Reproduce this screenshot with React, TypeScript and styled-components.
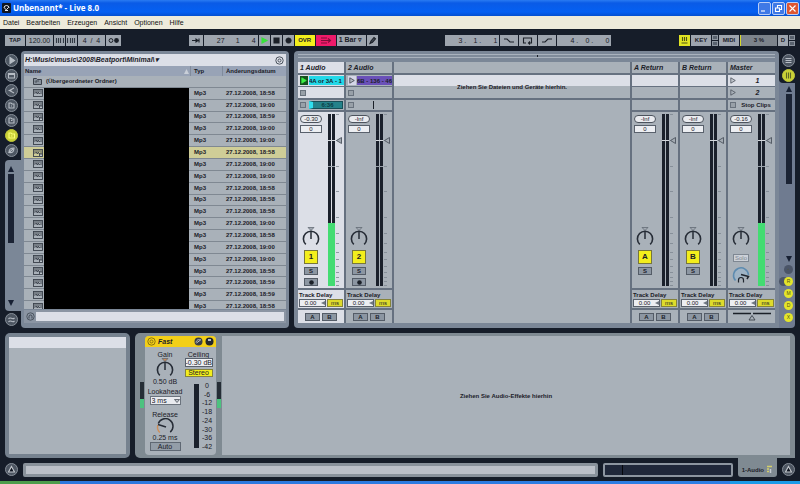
import React from "react";
import styled, { createGlobalStyle, css } from "styled-components";

const c = {
  night: "#161d29",
  frame: "#7b8797",
  line: "#667180",
  face: "#a9b1b9",
  light: "#dcdfe7",
  ink: "#1b2028",
  yellow: "#f3ee1c",
  green: "#43dc72",
  chrome: "#9ea5ae",
};

const Global = createGlobalStyle`
  *, *::before, *::after { box-sizing: border-box; }
  html, body { margin: 0; background: ${c.night}; }
  body, button, input, select {
    font-family: "Liberation Sans", Arial, sans-serif;
    font-size: 7px;
    line-height: 8px;
    color: ${c.ink};
  }
  button, input, select {
    appearance: none;
    margin: 0;
    padding: 0;
    border: 0;
    border-radius: 0;
    min-width: 0;
    outline-offset: 1px;
  }
  svg { display: block; flex: none; }
`;

const Page = styled.div`
  display: flex;
  flex-direction: column;
  min-height: 100vh;
  background: ${c.night};
`;

/* ---------- window ---------- */

const TitleBar = styled.header`
  display: flex;
  align-items: center;
  gap: 2px;
  height: 16px;
  padding: 0 1px 0 2px;
  background: linear-gradient(#2a7bf2 0, #0a5be6 3px, #0560f3 12px, #0450d0 16px);
`;

const Title = styled.h1`
  flex: 1;
  margin: 0;
  font: 700 8px/14px "Open Sans", sans-serif;
  color: #fff;
`;

const WindowButton = styled.button<{ $close?: boolean }>`
  display: grid;
  place-items: center;
  width: 13px;
  height: 13px;
  border: 1px solid #b9cdf6;
  border-radius: 2px;
  background: ${(p) => (p.$close ? "#dd5632" : "#3f79e6")};
`;

const WindowButtons = styled.div`
  display: flex;
  gap: 1px;
`;

const MenuBar = styled.nav`
  display: flex;
  gap: 7px;
  height: 13px;
  padding: 0 3px;
  background: #eeebdb;
`;

const MenuItem = styled.button`
  background: none;
  line-height: 12px;
  color: #111;
`;

/* ---------- control bar ---------- */

const ControlBar = styled.div`
  display: flex;
  justify-content: space-between;
  align-items: center;
  height: 22px;
  padding: 0 5px;
`;

const Group = styled.div`
  display: flex;
  gap: 1px;
`;

const toolFace = css<{ $w: number; $tone?: string }>`
  width: ${(p) => p.$w}px;
  height: 11px;
  background: ${(p) => p.$tone ?? c.chrome};
`;

const Tool = styled.button<{ $w: number; $tone?: string }>`
  ${toolFace}
  display: grid;
  place-items: center;
  font-size: 6px;
  font-weight: 700;
`;

const ToolField = styled.input<{ $w: number }>`
  ${toolFace}
  text-align: center;
`;

const Position = styled.div<{ $w: number }>`
  ${toolFace}
  display: grid;
  grid-template-columns: 21px 15px 1fr;
  align-items: center;
  text-align: right;
  line-height: 11px;
  padding-right: 2px;
`;

const ToolSelect = styled.select<{ $w: number }>`
  ${toolFace}
  padding-left: 2px;
  font-weight: 700;
`;

const Stack = styled.div`
  display: flex;
  flex-direction: column;
  gap: 1px;
`;

const Led = styled.span`
  width: 6px;
  height: 5px;
  background: #59626e;
  border: 1px solid #8d959f;
`;

const Cpu = styled.div<{ $w: number }>`
  ${toolFace}
  display: grid;
  place-items: center;
  font-size: 6px;
  font-weight: 700;
  background: #7c838b;
  border-left: 1px solid #d8d92b;
`;

/* ---------- browser ---------- */

const Workspace = styled.main`
  display: flex;
  height: 277px;
`;

const BrowserRail = styled.nav`
  display: flex;
  flex-direction: column;
  width: 21px;
  padding: 3px 0 2px 5px;
`;

const RailIcons = styled.div`
  display: flex;
  flex-direction: column;
  gap: 2px;
`;

const RoundButton = styled.button<{ $on?: boolean }>`
  display: grid;
  place-items: center;
  width: 13px;
  height: 13px;
  flex: none;
  border-radius: 50%;
  border: 1px solid ${(p) => (p.$on ? "#c2c83a" : "#878f99")};
  background: ${(p) => (p.$on ? "#c9d137" : "#4d5662")};
`;

const ScrollColumn = styled.div`
  display: flex;
  flex-direction: column;
  align-items: center;
  flex: 1;
  margin: 3px 0 2px;
  padding: 6px 4px 5px 0;
  border-radius: 4px 0 0 4px;
  background: ${c.frame};
`;

const Thumb = styled.div<{ $h: number }>`
  width: 6px;
  height: ${(p) => p.$h}px;
  margin: 2px 0 auto;
  background: #1b2334;
`;

const Browser = styled.section`
  display: flex;
  flex-direction: column;
  width: 268px;
  padding: 3px;
  border-radius: 4px;
  background: ${c.frame};
`;

const PathRow = styled.div`
  display: flex;
  align-items: center;
  justify-content: space-between;
  height: 12px;
  padding: 0 2px 0 1px;
  background: ${c.light};
`;

const PathButton = styled.button`
  background: none;
  font-size: 7px;
  font-weight: 700;
  font-style: italic;
`;

const ListArea = styled.div`
  position: relative;
  height: 243px;
  overflow: hidden;
  background: ${c.face};
`;

const FileTable = styled.table`
  display: block;
  font-size: 6px;
  font-weight: 700;

  thead { display: block; }
  tbody {
    display: grid;
    grid-auto-rows: 1fr;
    height: 237px;
  }
  th, td {
    display: flex;
    align-items: center;
    padding: 0 0 0 4px;
    text-align: left;
    line-height: 7px;
  }
`;

const FileRow = styled.tr<{ $on?: boolean }>`
  display: grid;
  grid-template-columns: 1fr 32px 64px;
  border-bottom: 1px solid #7f8892;
  background: ${(p) => (p.$on ? "#cfcd97" : c.face)};
  td:first-child { padding-left: 9px; gap: 4px; }
`;

const HeadRow = styled.tr`
  display: grid;
  grid-template-columns: 1fr 32px 64px;
  height: 10px;
  background: #98a3b6;
  th:first-child { padding: 0 1px; justify-content: space-between; }
  th + th { border-left: 1px solid #808b9c; padding-left: 3px; }
`;

const NameMask = styled.div`
  position: absolute;
  top: 22px;
  bottom: 0;
  left: 20px;
  right: 97px;
  background: #000;
`;

const SearchRow = styled.label`
  display: flex;
  align-items: center;
  gap: 1px;
  height: 13px;
  margin-top: 1px;
  padding: 2px;
  background: #8b95a3;
`;

const SearchInput = styled.input`
  flex: 1;
  height: 9px;
  background: ${c.light};
`;

/* ---------- session ---------- */

const Session = styled.section`
  display: flex;
  flex: 1;
  margin: 0 5px;
  min-width: 0;
`;

const SessionPanel = styled.div`
  flex: 1;
  min-width: 0;
  padding: 0 4px 5px;
  border-radius: 4px 4px 0 4px;
  background: ${c.frame};
`;

const Overview = styled.div`
  height: 11px;
  padding-top: 3px;
`;

const OverviewTrack = styled.div`
  height: 4px;
  border: 1px solid #a9b2bd;
  border-width: 1px 0;
  background: linear-gradient(90deg, transparent 50%, ${c.ink} 50%, ${c.ink} calc(50% + 1px), transparent calc(50% + 1px)) #7f8b9a;
`;

const Tracks = styled.div`
  display: grid;
  grid-template-columns: 46px 46px 1fr 46px 46px 47px;
  gap: 2px;
  background: ${c.line};
`;

const Column = styled.article`
  display: flex;
  flex-direction: column;
  gap: 2px;
  min-width: 0;
`;

const TrackTitle = styled.h2<{ $on?: boolean }>`
  height: 11px;
  margin: 0;
  padding: 0 2px;
  font: italic 700 7px/11px "Liberation Sans", Arial, sans-serif;
  white-space: nowrap;
  background: ${(p) => (p.$on ? c.light : c.face)};
`;

const Slots = styled.div`
  display: grid;
  grid-template-rows: 11px 11px;
  gap: 1px;
`;

const Slot = styled.div<{ $on?: boolean }>`
  display: flex;
  align-items: center;
  gap: 1px;
  min-width: 0;
  padding: 0 0 0 2px;
  font-weight: 700;
  background: ${(p) => (p.$on ? c.light : c.face)};
`;

const Status = styled(Slot)`
  height: 10px;
`;

const Launch = styled.button<{ $tone: string }>`
  display: grid;
  place-items: center;
  width: 8px;
  height: 9px;
  flex: none;
  background: ${(p) => p.$tone};
`;

const ClipName = styled.button<{ $tone: string }>`
  flex: 1;
  height: 9px;
  overflow: hidden;
  text-align: left;
  white-space: nowrap;
  font-size: 6px;
  font-weight: 700;
  background: ${(p) => p.$tone};
`;

const StopButton = styled.button`
  width: 6px;
  height: 6px;
  flex: none;
  border: 1px solid #69727d;
  background: #98a0a8;
`;

const Progress = styled.div`
  flex: 1;
  height: 8px;
  margin: 0 1px 0 2px;
  border: 1px solid #174e57;
  border-left: 4px solid #2fe0ef;
  background: #24828a;
  font-size: 6px;
  line-height: 6px;
  text-align: center;
  color: #0b3c44;
`;

const Playhead = styled.div`
  width: 1px;
  height: 8px;
  margin-left: 18px;
  background: ${c.ink};
`;

const SceneName = styled.span`
  flex: 1;
  padding-left: 3px;
  text-align: center;
  font-style: italic;
`;

const StopClips = styled.span`
  flex: 1;
  text-align: center;
  font-size: 6px;
  white-space: nowrap;
`;

const Mixer = styled.div<{ $on?: boolean }>`
  display: flex;
  gap: 5px;
  height: 176px;
  padding: 2px 0 2px 1px;
  background: ${(p) => (p.$on ? c.light : c.face)};
`;

const Strip = styled.div`
  display: flex;
  flex-direction: column;
  align-items: center;
  width: 24px;
  padding-top: 1px;
`;

const Peak = styled.output`
  width: 22px;
  height: 8px;
  margin-bottom: 2px;
  border: 1px solid #4c535d;
  border-radius: 4px;
  background: #e9ebef;
  font-size: 6px;
  line-height: 6px;
  text-align: center;
`;

const Field = styled.input<{ $w: number }>`
  width: ${(p) => p.$w}px;
  height: 8px;
  flex: none;
  border: 1px solid #59616c;
  background: #eceef2;
  font-size: 6px;
  line-height: 6px;
  text-align: center;
`;

const StripControls = styled.div`
  display: flex;
  flex-direction: column;
  align-items: center;
  gap: 3px;
  height: 59px;
  margin-top: auto;
`;

const Activator = styled.button`
  width: 14px;
  height: 14px;
  border: 1px solid #77763a;
  background: ${c.yellow};
  font-size: 8px;
  font-weight: 700;
`;

const SmallButton = styled.button<{ $w?: number }>`
  display: grid;
  place-items: center;
  width: ${(p) => p.$w ?? 14}px;
  height: 8px;
  border: 1px solid #545c67;
  background: #8c96a2;
  font-size: 6px;
  line-height: 6px;
  font-weight: 700;
`;

const SoloButton = styled(SmallButton)`
  margin: 4px 0 1px;
  border-color: #7e8792;
  background: #ccd1d8;
  color: #7e8792;
  font-weight: 400;
`;

const DelayBox = styled.div<{ $on?: boolean }>`
  display: flex;
  flex-direction: column;
  justify-content: space-between;
  height: 18px;
  padding: 1px;
  font-size: 6px;
  font-weight: 700;
  white-space: nowrap;
  background: ${(p) => (p.$on ? c.light : c.face)};
`;

const DelayRow = styled.div`
  position: relative;
  display: flex;
  gap: 1px;
  svg { position: absolute; left: 22px; top: 2px; pointer-events: none; }
`;

const DelayField = styled(Field)`
  padding-right: 4px;
`;

const Unit = styled.button<{ $w: number }>`
  width: ${(p) => p.$w}px;
  height: 8px;
  border: 1px solid #85833a;
  background: #dedb2c;
  font-size: 6px;
  line-height: 6px;
`;

const Cross = styled.div<{ $on?: boolean }>`
  display: flex;
  justify-content: center;
  align-items: center;
  gap: 2px;
  height: 13px;
  background: ${(p) => (p.$on ? c.light : c.face)};
`;

const DropHead = styled.div`
  height: 11px;
  background: ${c.face};
`;

const DropSlots = styled.div`
  display: grid;
  place-items: center;
  height: 23px;
  background: linear-gradient(${c.light} 11px, ${c.face} 11px);
  font-size: 6px;
  font-weight: 700;
`;

const DropBody = styled.div`
  flex: 1;
  background: ${c.face};
`;

const SessionRail = styled.nav`
  display: flex;
  flex-direction: column;
  width: 16px;
  background: #6f7b90;
  border-radius: 0 4px 4px 0;
`;

const Notch = styled.div`
  display: flex;
  flex-direction: column;
  gap: 2px;
  height: 32px;
  padding: 3px 0 0 3px;
  border-radius: 0 0 0 4px;
  background: ${c.night};
`;

const RailScroll = styled.div`
  display: flex;
  flex-direction: column;
  align-items: center;
  flex: 1;
  padding: 3px 0 0 4px;
`;

const Toggles = styled.div`
  display: flex;
  flex-direction: column;
  align-items: flex-end;
  gap: 3px;
  padding: 3px 2px 6px 0;
`;

const Toggle = styled.button<{ $on?: boolean; $tail?: boolean }>`
  width: 9px;
  height: 9px;
  border-radius: 50%;
  background: ${(p) => (p.$on ? "#e4e52a" : "#4b5568")};
  box-shadow: ${(p) => (p.$tail ? "-5px 0 0 #4b5568" : "none")};
  font-size: 5px;
  line-height: 9px;
  color: #4f5315;
`;

/* ---------- devices ---------- */

const DeviceArea = styled.section`
  display: flex;
  gap: 5px;
  flex: 1;
  min-height: 125px;
  margin: 5px 5px 0;
`;

const InfoBox = styled.aside`
  width: 125px;
  padding: 4px;
  border-radius: 5px;
  background: #76828f;
`;

const InfoInner = styled.div`
  height: 100%;
  background: linear-gradient(${c.light} 11px, ${c.face} 11px);
`;

const Chain = styled.div`
  display: flex;
  flex: 1;
  gap: 1px;
  padding: 3px 5px 3px 5px;
  border-radius: 5px 5px 0 5px;
  background: #7f8a92;
`;

const Device = styled.article`
  width: 71px;
  border-radius: 4px;
  overflow: hidden;
  background: ${c.face};
`;

const DeviceHead = styled.header`
  display: flex;
  align-items: center;
  gap: 2px;
  height: 11px;
  padding: 0 2px;
  background: #f3cf17;
`;

const DeviceName = styled.h2`
  flex: 1;
  margin: 0;
  font: italic 700 7px/11px "Liberation Sans", Arial, sans-serif;
`;

const DeviceIcon = styled.button`
  background: none;
`;

const DeviceBody = styled.div`
  display: grid;
  grid-template-columns: 32px 29px;
  gap: 3px;
  padding: 4px 3px 0 4px;
`;

const DeviceColumn = styled.div`
  display: flex;
  flex-direction: column;
  align-items: center;
  min-width: 0;
  white-space: nowrap;
`;

const Caption = styled.span`
  line-height: 7px;
`;

const Lookahead = styled.select`
  width: 31px;
  height: 9px;
  margin-bottom: 6px;
  padding-left: 1px;
  border: 1px solid #6b737d;
  background: #e9ebef;
  line-height: 7px;
`;

const SelectWrap = styled.label`
  position: relative;
  display: flex;
  flex-direction: column;
  align-items: center;
  margin-top: 3px;
  gap: 1px;
  svg { position: absolute; right: 2px; top: 11px; pointer-events: none; }
`;

const AutoButton = styled.button`
  width: 31px;
  height: 9px;
  margin-top: 1px;
  border: 1px solid #5f6873;
  background: #939da8;
  line-height: 7px;
`;

const CeilingField = styled(Field)`
  height: 9px;
  font-size: 7px;
`;

const StereoButton = styled(Unit)`
  height: 8px;
  margin: 2px 0 7px;
  background: ${c.yellow};
  font-size: 7px;
`;

const Reduction = styled.div`
  display: flex;
  gap: 2px;
  align-self: stretch;
  padding-left: 10px;
`;

const ReductionBar = styled.div`
  width: 5px;
  height: 64px;
  background: #1b212c;
`;

const Scale = styled.ol`
  display: flex;
  flex-direction: column;
  justify-content: space-between;
  align-items: center;
  width: 12px;
  height: 68px;
  margin: -2px 0 0;
  padding: 0;
  list-style: none;
  font-size: 7px;
  line-height: 7px;
`;

const ChainMeter = styled.div`
  align-self: flex-start;
  width: 4px;
  height: 26px;
  margin-top: 46px;
  background: linear-gradient(#252d36 17px, #4cc27f 17px);
`;

const EffectDrop = styled.div`
  display: grid;
  place-items: center;
  flex: 1;
  background: ${c.face};
  font-size: 6px;
  font-weight: 700;
`;

const Footer = styled.footer`
  display: flex;
  gap: 5px;
  height: 23px;
  padding: 0 5px;
`;

const FootSlot = styled.div`
  padding-top: 5px;
`;

const StatusLine = styled.div`
  flex: 1;
  height: 14px;
  margin-top: 5px;
  border: 3px solid #89929b;
  border-radius: 2px;
  background: #bbc0c8;
`;

const ClipOverview = styled.div`
  width: 130px;
  height: 14px;
  margin-top: 5px;
  border: 2px solid #8d96a0;
  border-radius: 2px;
  background: linear-gradient(90deg, transparent 17px, #05070c 17px, #05070c 18px, transparent 18px) #20283a;
`;

const ClipTab = styled.button`
  display: flex;
  align-items: center;
  justify-content: flex-end;
  gap: 2px;
  width: 39px;
  height: 19px;
  padding: 4px 4px 0 0;
  border-radius: 0 0 3px 3px;
  background: #7f8a92;
  font-size: 6px;
  font-weight: 700;
`;

const Taskbar = styled.div`
  height: 3px;
  background: linear-gradient(90deg, #4d9d4c 60px, #2c77dd 60px, #2c7fe4 730px, #1b9be8 730px);
`;

/* ---------- drawings ---------- */

const Tri = ({ dir = "up" }: { dir?: "up" | "down" }) => (
  <svg width="6" height="6" viewBox="0 0 6 6">
    <path d={dir === "up" ? "M3 0 6 6H0z" : "M0 0h6L3 6z"} fill="#172033" />
  </svg>
);

const Glyph = ({ d, fill = "none", stroke = "#b7bdc5", w = 9 }: { d: string; fill?: string; stroke?: string; w?: number }) => (
  <svg width={w} height="9" viewBox={`0 0 ${w} 9`} fill={fill} stroke={stroke} strokeWidth="1.1">
    <path d={d} />
  </svg>
);

const Knob = ({ label, angle = 0, accent = "#a3aab3" }: { label: string; angle?: number; accent?: string }) => (
  <svg width="20" height="20" viewBox="0 0 20 20" role="img" aria-label={label}>
    <path d="M7 .5h6L10 3.5z" fill={accent} stroke="#59616c" strokeWidth=".7" />
    <path d="M4.8 17.4A7.6 7.6 0 1 1 15.2 17.4" fill="none" stroke="#262c36" strokeWidth="1.6" />
    <path d="M10 12V4" stroke="#262c36" strokeWidth="1.5" transform={`rotate(${angle} 10 12)`} />
  </svg>
);

const ReleaseKnob = () => (
  <svg width="20" height="16" viewBox="0 0 20 16" role="img" aria-label="Release">
    <path d="M4.800 14.500A7.600 7.600 0 0 1 2.800 7" fill="none" stroke="#cf8f5a" strokeWidth="1.4" />
    <path d="M3.300 5.500A7.600 7.600 0 1 1 15.200 14.100" fill="none" stroke="#262c36" strokeWidth="1.5" />
    <path d="M11 9 3 6.500" stroke="#262c36" strokeWidth="1.5" />
  </svg>
);

const CueKnob = () => (
  <svg width="18" height="18" viewBox="0 0 18 18" role="img" aria-label="Cue">
    <path d="M3.500 14.500A7.500 7.500 0 1 1 16.500 9" fill="#9fb4c6" stroke="#5d8bb0" strokeWidth="1.5" />
    <path d="M9 8.500 16.500 10.500 15 13" fill="none" stroke="#20262f" strokeWidth="1.5" />
    <path d="M6.500 16v-2a2.500 2.500 0 0 1 5 0v2M6.500 14.500v2M11.500 14.500v2" fill="none" stroke="#20262f" strokeWidth="1.2" />
  </svg>
);

const ticks = [0, 26, 52, 77, 103, 119, 129, 138, 145, 152, 158, 163, 167, 171];

const Meter = ({ level = 0, mark = false }: { level?: number; mark?: boolean }) => (
  <svg width="16" height="172" viewBox="0 0 16 172" role="img" aria-label="Pegel">
    <rect x="0" width="3" height="172" fill="#1a202b" />
    <rect x="4" width="3" height="172" fill="#1a202b" />
    {level > 0 && <rect x="0" y={172 - level} width="7" height={level} fill={c.green} />}
    <path d="M0 26.5h7" stroke="#d5d9de" />
    {mark && <path d="M0 52.5h7" stroke="#9aa2ab" />}
    {ticks.map((y) => (
      <path key={y} d={`M8 ${y + 0.5}h3`} stroke="#7d8691" strokeWidth=".8" />
    ))}
    <path d="M8.500 26.500 13.500 23.500v6z" fill="#a4abb3" stroke="#4c535d" strokeWidth=".9" />
  </svg>
);

const ClipIcon = ({ sub }: { sub?: boolean }) => (
  <svg width="10" height="8" viewBox="0 0 10 8" fill="none" stroke="#3a414b" strokeWidth=".9">
    <rect x=".5" y=".5" width="9" height="7" />
    <path d="M1 4h1.500l.8-1 1 2 1-2 1 2 .8-1H9M1 2h8" />
    {sub && <path d="M6.500 5v2.500h3V5z" fill="#bcc3ca" />}
  </svg>
);

const FolderIcon = () => (
  <svg width="9" height="8" viewBox="0 0 9 8" fill="#89929d" stroke="#3a414b">
    <path d="M.5 1.500h3l1 1h4v5h-8z" />
    <path d="M3 6V4h3M3 3.500l-1 1" strokeWidth=".8" />
  </svg>
);

const PlayTri = ({ fill, stroke }: { fill: string; stroke: string }) => (
  <svg width="6" height="7" viewBox="0 0 6 7">
    <path d="M.8.8 5.300 3.500.8 6.200z" fill={fill} stroke={stroke} strokeWidth=".8" />
  </svg>
);

const HotSwap = ({ color = "#4a525d" }: { color?: string }) => (
  <svg width="9" height="9" viewBox="0 0 9 9" fill="none" stroke={color}>
    <circle cx="4.500" cy="4.500" r="3.700" />
    <circle cx="4.500" cy="4.500" r="1.500" />
  </svg>
);

const Phones = () => (
  <svg width="9" height="9" viewBox="0 0 9 9" fill="none" stroke="#3f4752">
    <circle cx="4.500" cy="4.500" r="3.700" strokeWidth=".8" />
    <path d="M3 6.500v-2a1.500 1.500 0 0 1 3 0v2" />
  </svg>
);

/* ---------- data ---------- */

const files: [string, boolean][] = [
  ["18:58", false], ["19:00", true], ["18:59", true], ["19:00", false], ["19:00", false],
  ["18:58", true], ["19:00", false], ["19:00", false], ["18:58", false], ["18:58", false],
  ["18:58", false], ["19:00", false], ["18:58", false], ["19:00", false], ["19:00", true],
  ["18:58", true], ["18:59", false], ["18:59", false], ["18:58", false],
];

const railGlyphs = [
  { label: "Instrumente", d: "M3 1.500 7.500 4.500 3 7.500z", fill: "#b7bdc5" },
  { label: "Plug-ins", d: "M1.500 2.500h6v4.500h-6zM1.500 3.500h6" },
  { label: "Geräte", d: "M7 2 2.500 4.500 7 7M1.500 4.500h3" },
  { label: "Dateien 1", d: "M2 2h2l1 1h2v4H2zM4 5h1" },
  { label: "Dateien 2", d: "M2 2h2l1 1h2v4H2zM4 4.500h1.500" },
  { label: "Dateien 3", d: "M2 2h2l1 1h2.500v4H2zM4 5h1.500", on: true },
  { label: "Hot-Swap", d: "M2 6.500C2 3 4 2 7 2 7 5 6 7 2 6.500L6 3" },
];

/* ---------- parts ---------- */

const Delay = ({ on, wide }: { on?: boolean; wide?: boolean }) => (
  <DelayBox $on={on}>
    <span>Track Delay</span>
    <DelayRow>
      <DelayField $w={27} defaultValue="0.00" aria-label="Track Delay" />
      <Unit $w={wide ? 17 : 16}>ms</Unit>
      <svg width="4" height="4" viewBox="0 0 4 4"><path d="M0 2 4 0v4z" fill="#6f7781" /></svg>
    </DelayRow>
  </DelayBox>
);

const CrossAssign = ({ on }: { on?: boolean }) => (
  <Cross $on={on}>
    <SmallButton $w={15}>A</SmallButton>
    <SmallButton $w={15}>B</SmallButton>
  </Cross>
);

type TrackProps = {
  name: string;
  tag: string;
  peak: string;
  on?: boolean;
  arm?: boolean;
  level?: number;
  slots: React.ReactNode;
  status: React.ReactNode;
};

const Track = ({ name, tag, peak, on, arm, level, slots, status }: TrackProps) => (
  <Column>
    <TrackTitle $on={on}>{name}</TrackTitle>
    <Slots>{slots}</Slots>
    <Status>{status}</Status>
    <Mixer $on={on}>
      <Strip>
        <Peak>{peak}</Peak>
        <Field $w={22} defaultValue="0" aria-label={`${name} Lautstärke`} />
        <StripControls>
          <Knob label={`${name} Panorama`} />
          <Activator>{tag}</Activator>
          <SmallButton>S</SmallButton>
          {arm && (
            <SmallButton aria-label="Aufnahme">
              <svg width="5" height="5" viewBox="0 0 5 5"><circle cx="2.500" cy="2.500" r="2.300" fill={c.ink} /></svg>
            </SmallButton>
          )}
        </StripControls>
      </Strip>
      <Meter level={level} mark={on || arm} />
    </Mixer>
    <Delay on={on} />
    <CrossAssign on={on} />
  </Column>
);

export default function App() {
  return (
    <>
      <Global />
      <Page>
        <TitleBar>
          <svg width="9" height="10" viewBox="0 0 9 10">
            <rect width="9" height="10" rx="1" fill="#10151f" />
            <path d="M2 5a2.500 2.500 0 0 1 5 0M3 7.500h3M2.500 5.500l2 1 2-2" fill="none" stroke="#e8ecf2" />
          </svg>
          <Title>Unbenannt* - Live 8.0</Title>
          <WindowButtons>
            <WindowButton aria-label="Minimieren"><Glyph d="M1 7h4" stroke="#fff" /></WindowButton>
            <WindowButton aria-label="Wiederherstellen"><Glyph d="M1.500 4h4v3.500h-4zM3.500 3.500v-2h4v4H6" stroke="#fff" /></WindowButton>
            <WindowButton $close aria-label="Schließen"><Glyph d="M1.500 1.500l6 6M7.500 1.500l-6 6" stroke="#fff" /></WindowButton>
          </WindowButtons>
        </TitleBar>
        <MenuBar>
          {["Datei", "Bearbeiten", "Erzeugen", "Ansicht", "Optionen", "Hilfe"].map((m) => (
            <MenuItem key={m}>{m}</MenuItem>
          ))}
        </MenuBar>

        <ControlBar>
          <Group>
            <Tool $w={20}>TAP</Tool>
            <ToolField $w={27} defaultValue="120.00" aria-label="Tempo" />
            <Tool $w={11} aria-label="Nudge runter"><Glyph d="M1.500 2v5M3.500 2v5M5.500 2v5M8.500 2v5" stroke="#333a44" /></Tool>
            <Tool $w={11} aria-label="Nudge hoch"><Glyph d="M.5 2v5M3.500 2v5M5.500 2v5M7.500 2v5" stroke="#333a44" /></Tool>
            <ToolField $w={27} defaultValue="4  /  4" aria-label="Taktart" />
            <Tool $w={15} aria-label="Metronom">
              <svg width="12" height="7" viewBox="0 0 12 7"><circle cx="3" cy="3.500" r="1.900" fill="none" stroke={c.ink} /><circle cx="8.500" cy="3.500" r="2.400" fill={c.ink} /></svg>
            </Tool>
          </Group>
          <Group>
            <Tool $w={14} aria-label="Folgen"><Glyph d="M1 4.500h4M5 3v3l2-1.500zM8 2.500v4" fill={c.ink} stroke={c.ink} /></Tool>
            <Position $w={54}><span>27</span><span>1</span><span>4</span></Position>
            <Tool $w={11} aria-label="Start"><Glyph d="M2 2 7 4.500 2 7z" fill="#39e33a" stroke="#39e33a" /></Tool>
            <Tool $w={11} aria-label="Stopp"><Glyph d="M2 2h5v5H2z" fill={c.ink} stroke={c.ink} /></Tool>
            <Tool $w={11} aria-label="Aufnahme"><Glyph d="M4.500 2a2.500 2.500 0 1 0 .1 0z" fill={c.ink} stroke={c.ink} /></Tool>
            <Tool $w={20} $tone={c.yellow}>OVR</Tool>
            <Tool $w={20} $tone="#ee1a6a" aria-label="Zurück zum Arrangement"><Glyph w={12} d="M1 2h6M1 4.500h9M1 7h6M8 2.500l2.500 2L8 6.500" stroke="#7c0f38" /></Tool>
            <ToolSelect $w={29} aria-label="Quantisierung"><option>1 Bar ▿</option></ToolSelect>
            <Tool $w={11} aria-label="Zeichnen"><Glyph d="M2 7.500 3 5l3-3.500 1.500 1.300-3 3.500z" fill="#444c56" stroke={c.ink} /></Tool>
          </Group>
          <Group>
            <Position $w={54}><span>3 .</span><span>1 .</span><span>1</span></Position>
            <Tool $w={18} aria-label="Punch-In"><Glyph w={12} d="M1 3h3l3 3h4" stroke={c.ink} /></Tool>
            <Tool $w={18} aria-label="Loop"><Glyph w={12} d="M4 7H1.500V2h8v5H7M8 5.500 6.500 7 8 8.500" stroke={c.ink} /></Tool>
            <Tool $w={18} aria-label="Punch-Out"><Glyph w={12} d="M1 6h3l3-3h4" stroke={c.ink} /></Tool>
            <Position $w={54}><span>4 .</span><span>0 .</span><span>0</span></Position>
          </Group>
          <Group>
            <Tool $w={11} $tone="#e0e323" aria-label="Computertastatur"><Glyph d="M2.500 1v4M4.500 1v4M6.500 1v4M1.500 7h6" stroke="#4e5316" /></Tool>
            <Tool $w={20}>KEY</Tool>
            <Stack><Led /><Led /></Stack>
            <Tool $w={20}>MIDI</Tool>
            <Cpu $w={37}>3 %</Cpu>
            <Tool $w={10}>D</Tool>
            <Stack><Led /><Led /></Stack>
          </Group>
        </ControlBar>

        <Workspace>
          <BrowserRail>
            <RailIcons>
              {railGlyphs.map((g) => (
                <RoundButton key={g.label} $on={g.on} aria-label={g.label}>
                  <Glyph d={g.d} fill={g.fill} stroke={g.on ? "#fbff77" : undefined} />
                </RoundButton>
              ))}
            </RailIcons>
            <ScrollColumn><Tri /><Thumb $h={69} /><Tri dir="down" /></ScrollColumn>
            <RoundButton aria-label="Groove-Pool"><Glyph d="M1.500 4c2-3 3.500 1.500 6-1M1.500 7c2-3 3.500 1.500 6-1" /></RoundButton>
          </BrowserRail>

          <Browser>
            <PathRow>
              <PathButton>H:\Music\music\2008\Beatport\Minimal\▾</PathButton>
              <HotSwap />
            </PathRow>
            <ListArea>
              <FileTable>
                <thead>
                  <HeadRow>
                    <th><span>Name</span><svg width="5" height="5" viewBox="0 0 5 5"><path d="M2.500 0 5 5H0z" fill="#c9cfd8" /></svg></th>
                    <th>Typ</th>
                    <th>Änderungsdatum</th>
                  </HeadRow>
                </thead>
                <tbody>
                  <FileRow><td><FolderIcon />(Übergeordneter Ordner)</td><td /><td /></FileRow>
                  {files.map(([time, sub], i) => (
                    <FileRow key={i} $on={i === 5}>
                      <td><ClipIcon sub={sub} /></td>
                      <td>Mp3</td>
                      <td>27.12.2008, {time}</td>
                    </FileRow>
                  ))}
                </tbody>
              </FileTable>
              <NameMask />
            </ListArea>
            <SearchRow>
              <Phones />
              <SearchInput aria-label="Vorschau" />
            </SearchRow>
          </Browser>

          <Session>
            <SessionPanel>
              <Overview><OverviewTrack /></Overview>
              <Tracks>
                <Track
                  name="1 Audio" tag="1" peak="-0.30" on arm level={63}
                  slots={<>
                    <Slot $on>
                      <Launch $tone="#14521c" aria-label="Clip starten"><PlayTri fill="#3df046" stroke="#3df046" /></Launch>
                      <ClipName $tone="#22d8e8">4A or 3A - 1</ClipName>
                    </Slot>
                    <Slot $on><StopButton aria-label="Stopp" /></Slot>
                  </>}
                  status={<><StopButton aria-label="Stopp" /><Progress>6:36</Progress></>}
                />
                <Track
                  name="2 Audio" tag="2" peak="-Inf" arm
                  slots={<>
                    <Slot>
                      <Launch $tone="#d5d6e8" aria-label="Clip starten"><PlayTri fill="#b5b9c4" stroke="#3b404a" /></Launch>
                      <ClipName $tone="#6a50b8">6B - 136 - 46</ClipName>
                    </Slot>
                    <Slot><StopButton aria-label="Stopp" /></Slot>
                  </>}
                  status={<><StopButton aria-label="Stopp" /><Playhead /></>}
                />
                <Column>
                  <DropHead />
                  <DropSlots>Ziehen Sie Dateien und Geräte hierhin.</DropSlots>
                  <DropBody />
                </Column>
                <Track name="A Return" tag="A" peak="-Inf" slots={<><Slot $on /><Slot /></>} status={null} />
                <Track name="B Return" tag="B" peak="-Inf" slots={<><Slot $on /><Slot /></>} status={null} />
                <Column>
                  <TrackTitle>Master</TrackTitle>
                  <Slots>
                    <Slot $on><PlayTri fill="#c3c8cf" stroke="#4c535d" /><SceneName>1</SceneName></Slot>
                    <Slot><PlayTri fill="#a9b1b9" stroke="#4c535d" /><SceneName>2</SceneName></Slot>
                  </Slots>
                  <Status><StopButton aria-label="Alle stoppen" /><StopClips>Stop Clips</StopClips></Status>
                  <Mixer>
                    <Strip>
                      <Peak>-0.16</Peak>
                      <Field $w={22} defaultValue="0" aria-label="Master Lautstärke" />
                      <StripControls>
                        <Knob label="Master Panorama" />
                        <SoloButton $w={16}>Solo</SoloButton>
                        <CueKnob />
                      </StripControls>
                    </Strip>
                    <Meter level={63} mark />
                  </Mixer>
                  <Delay wide />
                  <Cross>
                    <svg width="38" height="9" viewBox="0 0 38 9" role="img" aria-label="Crossfader">
                      <path d="M0 1.500h18M20 1.500h18" stroke={c.ink} strokeWidth="1.400" />
                      <path d="M19 3.500 22 8h-6z" fill={c.face} stroke="#3a414b" strokeWidth=".9" />
                    </svg>
                  </Cross>
                </Column>
              </Tracks>
            </SessionPanel>
            <SessionRail>
              <Notch>
                <RoundButton aria-label="Arrangement"><Glyph d="M1.500 2.500h6M1.500 4.500h6M1.500 6.500h6" /></RoundButton>
                <RoundButton $on aria-label="Session"><Glyph d="M2.500 1.500v6M4.500 1.500v6M6.500 1.500v6" stroke="#5f6626" /></RoundButton>
              </Notch>
              <RailScroll><Tri /><Thumb $h={90} /><Tri dir="down" /></RailScroll>
              <Toggles>
                <Toggle aria-label="I/O">◦</Toggle>
                <Toggle $on $tail>R</Toggle>
                <Toggle $on>M</Toggle>
                <Toggle $on>D</Toggle>
                <Toggle $on>X</Toggle>
              </Toggles>
            </SessionRail>
          </Session>
        </Workspace>

        <DeviceArea>
          <InfoBox><InfoInner /></InfoBox>
          <Chain>
            <ChainMeter />
            <Device>
              <DeviceHead>
                <HotSwap color="#8a7412" />
                <DeviceName>Fast</DeviceName>
                <DeviceIcon aria-label="Hot-Swap">
                  <svg width="9" height="9" viewBox="0 0 9 9"><circle cx="4.500" cy="4.500" r="4" fill="#3a3f48" /><path d="M2 5.500C3 2 5 2.500 7 3M2.500 6l4-3" fill="none" stroke="#b9bec6" /></svg>
                </DeviceIcon>
                <DeviceIcon aria-label="Speichern">
                  <svg width="9" height="9" viewBox="0 0 9 9"><circle cx="4.500" cy="4.500" r="4" fill="#23272f" /><path d="M3 2h3v2H3z" fill="#b9bec6" /></svg>
                </DeviceIcon>
              </DeviceHead>
              <DeviceBody>
                <DeviceColumn>
                  <Caption>Gain</Caption>
                  <Knob label="Gain" accent="#c98a5c" />
                  <Caption>0.50 dB</Caption>
                  <SelectWrap>
                    <Caption>Lookahead</Caption>
                    <Lookahead><option>3 ms</option></Lookahead>
                    <svg width="6" height="4" viewBox="0 0 6 4"><path d="M.5.500h5L3 3.500z" fill="#c5cad1" stroke="#4c535d" strokeWidth=".8" /></svg>
                  </SelectWrap>
                  <Caption>Release</Caption>
                  <ReleaseKnob />
                  <Caption>0.25 ms</Caption>
                  <AutoButton>Auto</AutoButton>
                </DeviceColumn>
                <DeviceColumn>
                  <Caption>Ceiling</Caption>
                  <CeilingField $w={28} defaultValue="-0.30 dB" aria-label="Ceiling" />
                  <StereoButton $w={28}>Stereo</StereoButton>
                  <Reduction>
                    <ReductionBar />
                    <Scale>
                      {["0", "-6", "-12", "-18", "-24", "-30", "-36", "-42"].map((v) => <li key={v}>{v}</li>)}
                    </Scale>
                  </Reduction>
                </DeviceColumn>
              </DeviceBody>
            </Device>
            <ChainMeter />
            <EffectDrop>Ziehen Sie Audio-Effekte hierhin</EffectDrop>
          </Chain>
        </DeviceArea>

        <Footer>
          <FootSlot>
            <RoundButton aria-label="Info ein/aus"><Glyph d="M4.500 1.500 7.500 7h-6z" fill="#0f1520" stroke="#c3c8ce" /></RoundButton>
          </FootSlot>
          <StatusLine />
          <ClipOverview />
          <ClipTab>
            1-Audio
            <svg width="7" height="9" viewBox="0 0 7 9"><path d="M1 1.500h5M1 4h2M1 6.500h2" stroke="#d3cf6b" strokeWidth="1.500" /><path d="M4.500 4v4" stroke="#c5cbd1" strokeWidth="1.500" /></svg>
          </ClipTab>
          <FootSlot>
            <RoundButton aria-label="Detailansicht"><Glyph d="M4.500 1.500 7.500 7h-6z" fill="#0f1520" stroke="#c3c8ce" /></RoundButton>
          </FootSlot>
        </Footer>
        <Taskbar />
      </Page>
    </>
  );
}
